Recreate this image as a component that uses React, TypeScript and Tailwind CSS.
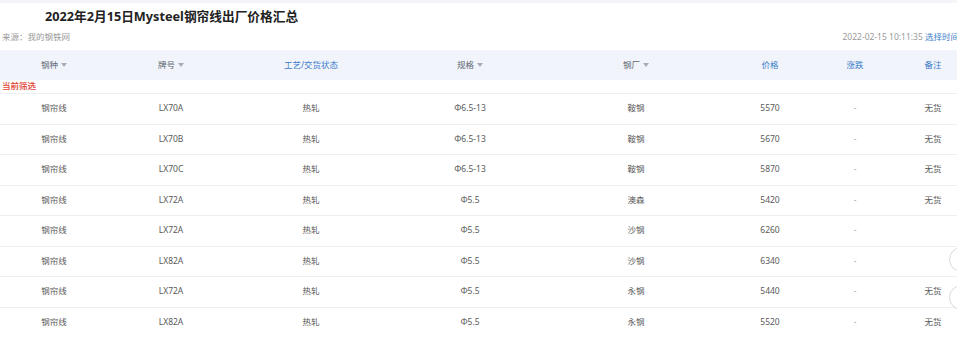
import React from "react";

type Row = {
	kind: string;
	grade: string;
	process: string;
	spec: string;
	mill: string;
	price: string;
	change: string;
	note: string;
};

const rows: Row[] = [
	{ kind: "钢帘线", grade: "LX70A", process: "热轧", spec: "Φ6.5-13", mill: "鞍钢", price: "5570", change: "-", note: "无货" },
	{ kind: "钢帘线", grade: "LX70B", process: "热轧", spec: "Φ6.5-13", mill: "鞍钢", price: "5670", change: "-", note: "无货" },
	{ kind: "钢帘线", grade: "LX70C", process: "热轧", spec: "Φ6.5-13", mill: "鞍钢", price: "5870", change: "-", note: "无货" },
	{ kind: "钢帘线", grade: "LX72A", process: "热轧", spec: "Φ5.5", mill: "澳森", price: "5420", change: "-", note: "无货" },
	{ kind: "钢帘线", grade: "LX72A", process: "热轧", spec: "Φ5.5", mill: "沙钢", price: "6260", change: "-", note: "" },
	{ kind: "钢帘线", grade: "LX82A", process: "热轧", spec: "Φ5.5", mill: "沙钢", price: "6340", change: "-", note: "" },
	{ kind: "钢帘线", grade: "LX72A", process: "热轧", spec: "Φ5.5", mill: "永钢", price: "5440", change: "-", note: "无货" },
	{ kind: "钢帘线", grade: "LX82A", process: "热轧", spec: "Φ5.5", mill: "永钢", price: "5520", change: "-", note: "无货" },
];

const cols = "grid grid-cols-[108px_126px_154px_164px_168px_100px_70px_86px]";

function Caret() {
	return (
		<svg className="ml-[3px] h-[4px] w-[6px]" viewBox="0 0 6 4">
			<title>sort</title>
			<path d="M0 0h6L3 4z" fill="#a6adb6" />
		</svg>
	);
}

function HeadCell({ label, sortable }: { label: string; sortable?: boolean }) {
	return (
		<div
			className={`flex items-center justify-center ${
				sortable ? "text-[#5f6670]" : "text-[#3d7cc9]"
			}`}
		>
			<span>{label}</span>
			{sortable && <Caret />}
		</div>
	);
}

export default function App() {
	return (
		<div className="relative h-[359px] w-[957px] overflow-hidden bg-white font-['Noto_Sans','Noto_Sans_CJK_SC',sans-serif]">
			<div className="w-[976px]">
				<div className="h-[3px] bg-[#f3f5f8]" />
				<div className="flex h-[28px] items-center pl-[45px] text-[12.7px] font-bold text-[#222]">
					2022年2月15日Mysteel钢帘线出厂价格汇总
				</div>
				<div className="flex h-[12px] items-center justify-between pl-[2px] pr-[17px] text-[8.5px] text-[#9a9a9a]">
					<span>来源：我的钢铁网</span>
					<span>
						2022-02-15 10:11:35 <span className="text-[#3d7cc9]">选择时间</span>
					</span>
				</div>
				<div className={`${cols} mt-[7px] h-[30px] bg-[#f1f5fb] text-[8.5px]`}>
					<HeadCell label="钢种" sortable />
					<HeadCell label="牌号" sortable />
					<HeadCell label="工艺/交货状态" />
					<HeadCell label="规格" sortable />
					<HeadCell label="钢厂" sortable />
					<HeadCell label="价格" />
					<HeadCell label="涨跌" />
					<HeadCell label="备注" />
				</div>
				<div className="flex h-[13px] items-center pl-[2px] text-[8.5px] font-medium text-[#e2402f]">
					当前筛选
				</div>
				{rows.map((r, i) => (
					<div
						key={i}
						className={`${cols} h-[30.5px] border-t border-[#efefef] text-[8.5px] text-[#5a5a5a]`}
					>
						<div className="flex items-center justify-center">{r.kind}</div>
						<div className="flex items-center justify-center">{r.grade}</div>
						<div className="flex items-center justify-center">{r.process}</div>
						<div className="flex items-center justify-center">{r.spec}</div>
						<div className="flex items-center justify-center">{r.mill}</div>
						<div className="flex items-center justify-center">{r.price}</div>
						<div className="flex items-center justify-center text-[#aaa]">{r.change}</div>
						<div className="flex items-center justify-center">{r.note}</div>
					</div>
				))}
			</div>
			<div className="absolute left-[949px] top-[247px] h-[25px] w-[25px] rounded-full border border-[#d9d9d9] bg-white" />
			<div className="absolute left-[949px] top-[285px] h-[25px] w-[25px] rounded-full border border-[#d9d9d9] bg-white" />
		</div>
	);
}
